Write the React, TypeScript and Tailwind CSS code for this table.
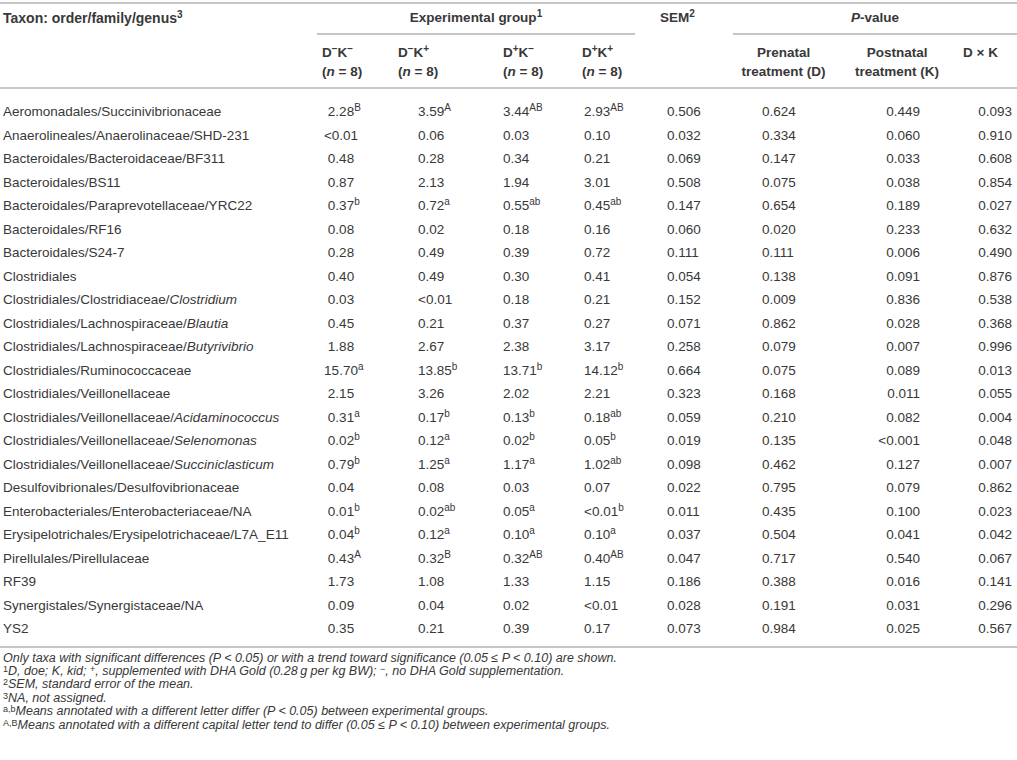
import React from "react";

// cells use "^" to mark a superscript letter and "*" to wrap an italic genus
const rows: string[][] = [
  ["Aeromonadales/Succinivibrionaceae", "2.28^B", "3.59^A", "3.44^AB", "2.93^AB", "0.506", "0.624", "0.449", "0.093"],
  ["Anaerolineales/Anaerolinaceae/SHD-231", "<0.01", "0.06", "0.03", "0.10", "0.032", "0.334", "0.060", "0.910"],
  ["Bacteroidales/Bacteroidaceae/BF311", "0.48", "0.28", "0.34", "0.21", "0.069", "0.147", "0.033", "0.608"],
  ["Bacteroidales/BS11", "0.87", "2.13", "1.94", "3.01", "0.508", "0.075", "0.038", "0.854"],
  ["Bacteroidales/Paraprevotellaceae/YRC22", "0.37^b", "0.72^a", "0.55^ab", "0.45^ab", "0.147", "0.654", "0.189", "0.027"],
  ["Bacteroidales/RF16", "0.08", "0.02", "0.18", "0.16", "0.060", "0.020", "0.233", "0.632"],
  ["Bacteroidales/S24-7", "0.28", "0.49", "0.39", "0.72", "0.111", "0.111", "0.006", "0.490"],
  ["Clostridiales", "0.40", "0.49", "0.30", "0.41", "0.054", "0.138", "0.091", "0.876"],
  ["Clostridiales/Clostridiaceae/*Clostridium*", "0.03", "<0.01", "0.18", "0.21", "0.152", "0.009", "0.836", "0.538"],
  ["Clostridiales/Lachnospiraceae/*Blautia*", "0.45", "0.21", "0.37", "0.27", "0.071", "0.862", "0.028", "0.368"],
  ["Clostridiales/Lachnospiraceae/*Butyrivibrio*", "1.88", "2.67", "2.38", "3.17", "0.258", "0.079", "0.007", "0.996"],
  ["Clostridiales/Ruminococcaceae", "15.70^a", "13.85^b", "13.71^b", "14.12^b", "0.664", "0.075", "0.089", "0.013"],
  ["Clostridiales/Veillonellaceae", "2.15", "3.26", "2.02", "2.21", "0.323", "0.168", "0.011", "0.055"],
  ["Clostridiales/Veillonellaceae/*Acidaminococcus*", "0.31^a", "0.17^b", "0.13^b", "0.18^ab", "0.059", "0.210", "0.082", "0.004"],
  ["Clostridiales/Veillonellaceae/*Selenomonas*", "0.02^b", "0.12^a", "0.02^b", "0.05^b", "0.019", "0.135", "<0.001", "0.048"],
  ["Clostridiales/Veillonellaceae/*Succiniclasticum*", "0.79^b", "1.25^a", "1.17^a", "1.02^ab", "0.098", "0.462", "0.127", "0.007"],
  ["Desulfovibrionales/Desulfovibrionaceae", "0.04", "0.08", "0.03", "0.07", "0.022", "0.795", "0.079", "0.862"],
  ["Enterobacteriales/Enterobacteriaceae/NA", "0.01^b", "0.02^ab", "0.05^a", "<0.01^b", "0.011", "0.435", "0.100", "0.023"],
  ["Erysipelotrichales/Erysipelotrichaceae/L7A_E11", "0.04^b", "0.12^a", "0.10^a", "0.10^a", "0.037", "0.504", "0.041", "0.042"],
  ["Pirellulales/Pirellulaceae", "0.43^A", "0.32^B", "0.32^AB", "0.40^AB", "0.047", "0.717", "0.540", "0.067"],
  ["RF39", "1.73", "1.08", "1.33", "1.15", "0.186", "0.388", "0.016", "0.141"],
  ["Synergistales/Synergistaceae/NA", "0.09", "0.04", "0.02", "<0.01", "0.028", "0.191", "0.031", "0.296"],
  ["YS2", "0.35", "0.21", "0.39", "0.17", "0.073", "0.984", "0.025", "0.567"],
];

const colWidths = [317, 80, 100, 83, 77, 78, 97, 130, 55];

// padding / alignment of the value cells, one per column after the taxon
const valueCell = [
  "pl-[11px]",
  "pl-[21px]",
  "pl-[6px]",
  "pl-[4px]",
  "pl-[10px]",
  "pl-[27px]",
  "pr-[42px] text-right",
  "pr-[5px] text-right",
];

function Sup({ children }: { children: React.ReactNode }) {
  return <span className="relative -top-[5px] text-[10px] leading-none">{children}</span>;
}

function NoteSup({ children }: { children: React.ReactNode }) {
  return <span className="relative -top-[3px] text-[9px] leading-none not-italic">{children}</span>;
}

function Num({ value }: { value: string }) {
  const [n, s] = value.split("^");
  return (
    <span className="relative leading-[normal]">
      {n}
      {s && <span className="absolute left-full -top-[1px] text-[10px] leading-none">{s}</span>}
    </span>
  );
}

function Taxon({ name }: { name: string }) {
  const parts = name.split("*");
  return (
    <>
      {parts.map((p, i) => (i % 2 === 1 ? <i key={i}>{p}</i> : <span key={i}>{p}</span>))}
    </>
  );
}

function GroupHead({ a, b }: { a: string; b: string }) {
  return (
    <>
      D<Sup>{a}</Sup>K<Sup>{b}</Sup>
      <br />(<i>n</i> = 8)
    </>
  );
}

export default function App() {
  const th2 = "h-[54px] pt-[8px] align-top border-b-2 border-[#c6c6c6] font-bold leading-[19px] text-left";
  return (
    <div className="w-[1017px] h-[760px] bg-white pt-[2px] text-[#383838] font-['Liberation_Sans',Arial,sans-serif] text-[13.5px]">
      <table className="w-[1017px] table-fixed border-separate border-spacing-0 border-t-2 border-[#c6c6c6]">
        <colgroup>
          {colWidths.map((w, i) => (
            <col key={i} style={{ width: w }} />
          ))}
        </colgroup>
        <thead>
          <tr>
            <th rowSpan={2} className="pl-[3px] pt-[6px] align-top text-left font-bold text-[14px] leading-[16px] border-b-2 border-[#c6c6c6]">
              Taxon: order/family/genus<Sup>3</Sup>
            </th>
            <th colSpan={4} className="p-0 align-top font-bold">
              <div className="mr-[22px] h-[31px] pt-[6px] leading-[16px] text-center border-b-2 border-[#c6c6c6]">
                Experimental group<Sup>1</Sup>
              </div>
            </th>
            <th rowSpan={2} className="pl-[3px] pt-[6px] align-top text-left font-bold leading-[16px] border-b-2 border-[#c6c6c6]">
              SEM<Sup>2</Sup>
            </th>
            <th colSpan={3} className="p-0 align-top font-bold">
              <div className="-ml-[2px] h-[31px] pt-[6px] leading-[16px] text-center border-b-2 border-[#c6c6c6]">
                <i>P</i>-value
              </div>
            </th>
          </tr>
          <tr>
            <th className={`${th2} pl-[5px]`}>
              <GroupHead a="−" b="−" />
            </th>
            <th className={`${th2} pl-[1px]`}>
              <GroupHead a="−" b="+" />
            </th>
            <th className={`${th2} pl-[6px]`}>
              <GroupHead a="+" b="−" />
            </th>
            <th className={`${th2} pl-[2px]`}>
              <GroupHead a="+" b="+" />
            </th>
            <th className={`${th2} text-center!`}>
              Prenatal
              <br />
              treatment (D)
            </th>
            <th className={`${th2} text-center!`}>
              Postnatal
              <br />
              treatment (K)
            </th>
            <th className={`${th2} pl-[1px]`}>D × K</th>
          </tr>
        </thead>
        <tbody>
          <tr className="h-[11px]">
            <td colSpan={9} className="p-0" />
          </tr>
          {rows.map((r, ri) => (
            <tr key={ri} className="leading-[23.5px]">
              <td className="pl-[3px] whitespace-nowrap">
                <Taxon name={r[0]} />
              </td>
              {r.slice(1).map((v, ci) => (
                <td key={ci} className={`whitespace-nowrap ${valueCell[ci]}`}>
                  {ci === 0 ? (
                    <div className="flex h-[23.5px] w-[26px] items-center justify-center">
                      <Num value={v} />
                    </div>
                  ) : (
                    <Num value={v} />
                  )}
                </td>
              ))}
            </tr>
          ))}
          <tr className="h-[5px]">
            <td colSpan={9} className="p-0" />
          </tr>
        </tbody>
      </table>
      <div className="border-t-2 border-[#c6c6c6] pt-[4px] pl-[3px] text-[12.5px] leading-[13.4px] italic">
        <p>
          Only taxa with significant differences (<i>P</i> &lt; 0.05) or with a trend toward significance (0.05 ≤ <i>P</i>{" "}
          &lt; 0.10) are shown.
        </p>
        <p>
          <NoteSup>1</NoteSup>D, doe; K, kid; <NoteSup>+</NoteSup>, supplemented with DHA Gold (0.28&thinsp;g per kg BW);{" "}
          <NoteSup>−</NoteSup>, no DHA Gold supplementation.
        </p>
        <p>
          <NoteSup>2</NoteSup>SEM, standard error of the mean.
        </p>
        <p>
          <NoteSup>3</NoteSup>NA, not assigned.
        </p>
        <p>
          <NoteSup>a,b</NoteSup>Means annotated with a different letter differ (<i>P</i> &lt; 0.05) between experimental groups.
        </p>
        <p>
          <NoteSup>A,B</NoteSup>Means annotated with a different capital letter tend to differ (0.05 ≤ <i>P</i> &lt; 0.10)
          between experimental groups.
        </p>
      </div>
    </div>
  );
}
